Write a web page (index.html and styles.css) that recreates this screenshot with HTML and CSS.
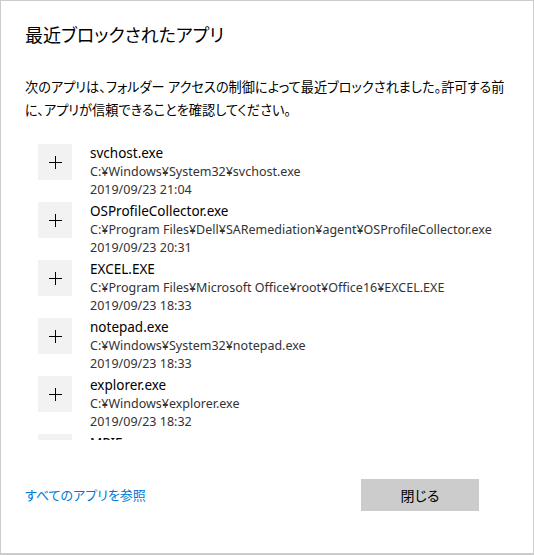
FILE: index.html
```html
<!DOCTYPE html>
<html lang="ja">
<head>
  <meta charset="UTF-8" />
  <title>最近ブロックされたアプリ</title>
  <link rel="stylesheet" href="styles.css">
</head>
<body>

  <div class="dialog">
    <h1 class="dialog-title">最近ブロックされたアプリ</h1>

    <p class="dialog-text">次のアプリは、フォルダー アクセスの制御によって最近ブロックされました。許可する前に、アプリが信頼できることを確認してください。</p>

    <div class="app-list">
      <div class="app-item">
        <button class="add-btn"><span class="plus"></span></button>
        <div class="app-info">
          <div class="app-name">svchost.exe</div>
          <div class="app-path">C:¥Windows¥System32¥svchost.exe</div>
          <div class="app-date">2019/09/23 21:04</div>
        </div>
      </div>
      <div class="app-item">
        <button class="add-btn"><span class="plus"></span></button>
        <div class="app-info">
          <div class="app-name">OSProfileCollector.exe</div>
          <div class="app-path">C:¥Program Files¥Dell¥SARemediation¥agent¥OSProfileCollector.exe</div>
          <div class="app-date">2019/09/23 20:31</div>
        </div>
      </div>
      <div class="app-item">
        <button class="add-btn"><span class="plus"></span></button>
        <div class="app-info">
          <div class="app-name">EXCEL.EXE</div>
          <div class="app-path">C:¥Program Files¥Microsoft Office¥root¥Office16¥EXCEL.EXE</div>
          <div class="app-date">2019/09/23 18:33</div>
        </div>
      </div>
      <div class="app-item">
        <button class="add-btn"><span class="plus"></span></button>
        <div class="app-info">
          <div class="app-name">notepad.exe</div>
          <div class="app-path">C:¥Windows¥System32¥notepad.exe</div>
          <div class="app-date">2019/09/23 18:33</div>
        </div>
      </div>
      <div class="app-item">
        <button class="add-btn"><span class="plus"></span></button>
        <div class="app-info">
          <div class="app-name">explorer.exe</div>
          <div class="app-path">C:¥Windows¥explorer.exe</div>
          <div class="app-date">2019/09/23 18:32</div>
        </div>
      </div>
      <div class="app-item">
        <button class="add-btn"><span class="plus"></span></button>
        <div class="app-info">
          <div class="app-name">MPIF.exe</div>
          <div class="app-path">C:¥Windows¥MPIF.exe</div>
          <div class="app-date">2019/09/23 18:30</div>
        </div>
      </div>
    </div>

    <div class="dialog-footer">
      <a class="see-all" href="#">すべてのアプリを参照</a>
      <button class="close-btn">閉じる</button>
    </div>
  </div>

</body>
</html>
```

FILE: styles.css
```css
* {
  box-sizing: border-box;
}

html, body {
  margin: 0;
  padding: 0;
  height: 100%;
}

body {
  font-family: "Noto Sans", "Noto Sans CJK JP", sans-serif;
  font-feature-settings: "palt";
  background: #fff;
  color: #000;
}

.dialog {
  width: 534px;
  height: 555px;
  border: 1px solid #cccccc;
  border-bottom-width: 2px;
  display: flex;
  flex-direction: column;
  padding: 0 20px 0 24px;
}

.dialog-title {
  font-size: 18px;
  font-weight: 400;
  line-height: 26px;
  margin: 21px 0 0;
}

.dialog-text {
  font-size: 13.2px;
  line-height: 23px;
  margin: 28px 0 0;
}

/* list */
.app-list {
  margin: 21px 0 0 13px;
  height: 297px;
  overflow: hidden;
}

.app-item {
  display: flex;
  gap: 18px;
  height: 58px;
}

.add-btn {
  width: 34px;
  height: 36px;
  margin-top: 1px;
  background: #f2f2f2;
  border: none;
  padding: 0;
  display: flex;
  justify-content: center;
  align-items: center;
  flex-shrink: 0;
}

.plus {
  position: relative;
  width: 13px;
  height: 13px;
}

.plus::before,
.plus::after {
  content: "";
  position: absolute;
  background: #000;
}

.plus::before {
  left: 0;
  top: 6px;
  width: 13px;
  height: 1px;
}

.plus::after {
  left: 6px;
  top: 0;
  width: 1px;
  height: 13px;
}

.app-info {
  display: flex;
  flex-direction: column;
}

.app-name {
  font-size: 13.5px;
  line-height: 20px;
}

.app-path,
.app-date {
  font-size: 12.5px;
  line-height: 18px;
  color: #333;
  white-space: nowrap;
}

/* footer */
.dialog-footer {
  display: flex;
  align-items: center;
  justify-content: space-between;
  margin-top: 39px;
  padding-right: 34px;
}

.see-all {
  color: #0078d7;
  text-decoration: none;
  font-size: 13px;
  margin-top: -2px;
}

.close-btn {
  width: 118px;
  height: 32px;
  background: #cccccc;
  border: none;
  font-family: inherit;
  font-feature-settings: "palt";
  font-size: 14px;
  color: #000;
}
```
